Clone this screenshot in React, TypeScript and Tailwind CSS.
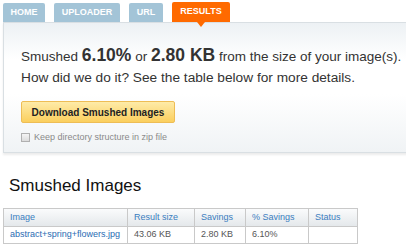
import React from "react";

const tabs = [
  { label: "HOME", w: "w-[42px]" },
  { label: "UPLOADER", w: "w-[66px]" },
  { label: "URL", w: "w-[34px]" },
];

export default function App() {
  return (
    <div className="w-[406px] h-[246px] overflow-hidden bg-white font-['Liberation_Sans',Arial,sans-serif]">
      <div className="flex items-end h-[22px] pl-[3px] gap-[9px]">
        {tabs.map((t) => (
          <div
            key={t.label}
            className={`${t.w} h-[19px] rounded-t-[2px] bg-[#a3c4d7] text-white text-[9px] font-bold flex items-center justify-center`}
          >
            {t.label}
          </div>
        ))}
        <div className="relative z-10 w-[58px] h-[20px] rounded-t-[2px] bg-[#ff6a00] text-white text-[9px] font-bold flex items-center justify-center">
          RESULTS
          <div className="absolute left-[25px] top-[20px] w-0 h-0 border-l-[4px] border-r-[4px] border-t-[5px] border-l-transparent border-r-transparent border-t-[#ff6a00]" />
        </div>
      </div>
      <div className="ml-[3px] w-[420px] h-[131px] border border-r-0 border-[#d9dfe3] bg-[linear-gradient(to_bottom,#edf1f4_0%,#ffffff_28%,#ffffff_55%,#f0f3f5_100%)] shadow-[0_2px_2px_rgba(0,0,0,0.08)] pl-[17px] pt-[22px]">
        <div className="whitespace-nowrap text-[13.5px] leading-[21px] text-[#333]">
          Smushed <span className="text-[17.5px] font-bold">6.10%</span> or{" "}
          <span className="text-[17.5px] font-bold">2.80 KB</span> from the size of your image(s).
        </div>
        <div className="whitespace-nowrap text-[13.7px] leading-[21px] text-[#333]">
          How did we do it? See the table below for more details.
        </div>
        <button className="mt-[13px] w-[154px] h-[22px] rounded-[2px] border border-[#eebd55] bg-[linear-gradient(to_bottom,#feeba8,#fbcf5e)] text-[10px] font-bold text-[#222] flex items-center justify-center whitespace-nowrap">
          Download Smushed Images
        </button>
        <label className="mt-[8px] flex items-center gap-[4px] text-[9px] text-[#8a8a8a] whitespace-nowrap">
          <span className="w-[9px] h-[9px] border border-[#b0b0b0] bg-[linear-gradient(to_bottom,#f4f4f4,#dcdcdc)]" />
          Keep directory structure in zip file
        </label>
      </div>
      <h2 className="ml-[9px] mt-[21px] text-[17px] leading-[24px] text-[#111]">Smushed Images</h2>
      <table className="ml-[3px] mt-[10px] border-collapse border border-[#a8a8a8] text-[9px] whitespace-nowrap">
        <thead>
          <tr className="h-[18px] bg-[linear-gradient(to_bottom,#fafbfc,#e3e7ea)] text-[#3a7dbf]">
            <th className="w-[124px] border border-[#c9c9c9] px-[6px] text-left font-normal">Image</th>
            <th className="w-[67px] border border-[#c9c9c9] px-[6px] text-left font-normal">Result size</th>
            <th className="w-[51px] border border-[#c9c9c9] px-[6px] text-left font-normal">Savings</th>
            <th className="w-[63px] border border-[#c9c9c9] px-[6px] text-left font-normal">% Savings</th>
            <th className="w-[49px] border border-[#c9c9c9] px-[6px] text-left font-normal">Status</th>
          </tr>
        </thead>
        <tbody>
          <tr className="h-[17px] text-[#555]">
            <td className="border border-[#c9c9c9] px-[6px] text-[#2a6cb3]">abstract+spring+flowers.jpg</td>
            <td className="border border-[#c9c9c9] px-[6px]">43.06 KB</td>
            <td className="border border-[#c9c9c9] px-[6px]">2.80 KB</td>
            <td className="border border-[#c9c9c9] px-[6px]">6.10%</td>
            <td className="border border-[#c9c9c9] px-[6px]"></td>
          </tr>
        </tbody>
      </table>
    </div>
  );
}
